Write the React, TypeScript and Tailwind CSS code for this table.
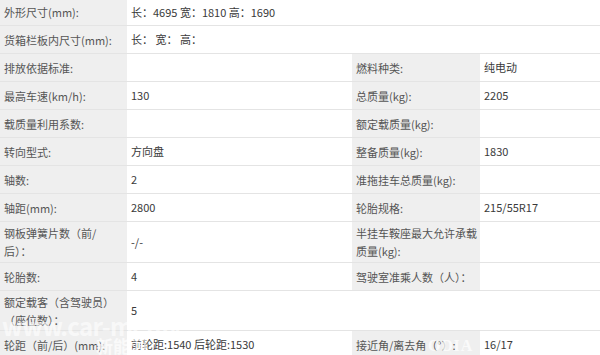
import React from 'react';

type Row = {
  label: React.ReactNode;
  value?: React.ReactNode;
  label2?: React.ReactNode;
  value2?: React.ReactNode;
  wide?: boolean;
  h: string;
};

const rows: Row[] = [
  { label: '外形尺寸(mm):', value: '长：4695 宽：1810 高：1690', wide: true, h: 'h-[27px]' },
  { label: '货箱栏板内尺寸(mm):', value: '长： 宽： 高：', wide: true, h: 'h-[28px]' },
  { label: '排放依据标准:', value: '', label2: '燃料种类:', value2: '纯电动', h: 'h-[28px]' },
  { label: '最高车速(km/h):', value: '130', label2: '总质量(kg):', value2: '2205', h: 'h-[28px]' },
  { label: '载质量利用系数:', value: '', label2: '额定载质量(kg):', value2: '', h: 'h-[28px]' },
  { label: '转向型式:', value: '方向盘', label2: '整备质量(kg):', value2: '1830', h: 'h-[28px]' },
  { label: '轴数:', value: '2', label2: '准拖挂车总质量(kg):', value2: '', h: 'h-[28px]' },
  { label: '轴距(mm):', value: '2800', label2: '轮胎规格:', value2: '215/55R17', h: 'h-[28px]' },
  {
    label: <>钢板弹簧片数（前/<br />后）：</>,
    value: '-/-',
    label2: <>半挂车鞍座最大允许承载<br />质量(kg):</>,
    value2: '',
    h: 'h-[41px]',
  },
  { label: '轮胎数:', value: '4', label2: '驾驶室准乘人数（人）：', value2: '', h: 'h-[28px]' },
  { label: <>额定载客（含驾驶员）<br />（座位数）：</>, value: '5', wide: true, h: 'h-[40px]' },
  { label: '轮距（前/后）(mm):', value: '前轮距:1540 后轮距:1530', label2: '接近角/离去角（°）:', value2: '16/17', h: 'h-[28px]' },
];

export default function App() {
  return (
    <div
      className="relative w-[600px] h-[355px] overflow-hidden bg-white text-[11px] text-[#444]"
      style={{ fontFamily: '"Noto Sans CJK SC", "Noto Sans", sans-serif' }}
    >
      <div className="-mt-px">
        {rows.map((r, i) => (
          <div key={i} className={`grid grid-cols-[127px_225px_128px_120px] border-b border-[#e4e4e4] ${r.h}`}>
            <div className="bg-[#efefef] pl-1 pr-0.5 flex items-center leading-[18px] text-[#555]">{r.label}</div>
            {r.wide ? (
              <div className="col-span-3 pl-[4px] flex items-center text-[#3a3a3a]">{r.value}</div>
            ) : (
              <>
                <div className="pl-[4px] flex items-center text-[#3a3a3a]">{r.value}</div>
                <div className="bg-[#efefef] pl-1 pr-0.5 flex items-center leading-[18px] text-[#555]">{r.label2}</div>
                <div className="pl-[4px] flex items-center text-[#3a3a3a]">{r.value2}</div>
              </>
            )}
          </div>
        ))}
      </div>

      {/* watermark */}
      <div className="absolute left-[2px] top-[314px] text-[24px] font-bold tracking-tight text-white/60 leading-none pointer-events-none">
        www.car-metav
      </div>
      <div className="absolute left-[96px] top-[337px] text-[17px] font-bold text-white/70 leading-none pointer-events-none">
        新能源
      </div>
      <div
        className="absolute left-[428px] top-[338px] text-[16px] font-bold text-white/70 leading-none tracking-wider pointer-events-none"
        style={{ fontFamily: '"Liberation Serif", serif' }}
      >
        ODIA
      </div>
    </div>
  );
}
